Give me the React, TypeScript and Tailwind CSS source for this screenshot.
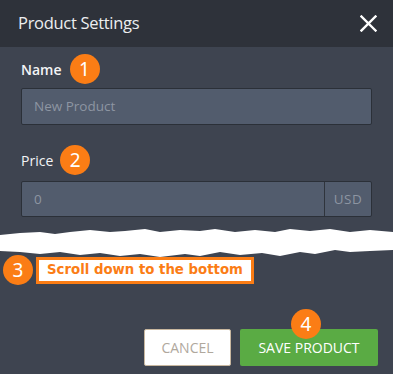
import React from "react";

function Badge({ n, className = "" }: { n: string; className?: string }) {
  return (
    <div
      className={
        "flex h-[30px] w-[30px] items-center justify-center rounded-full bg-[#fb7d15] text-[19px] leading-none text-white " +
        className
      }
      style={{ fontFamily: '"Noto Sans", sans-serif' }}
    >
      {n}
    </div>
  );
}

export default function App() {
  return (
    <div
      className="h-[374px] w-[393px] overflow-hidden bg-[#3e4450]"
      style={{ fontFamily: '"Open Sans", "Noto Sans", sans-serif' }}
    >
      {/* header */}
      <div className="flex h-[47px] items-center justify-between bg-[#2e323a] pl-[18px] pr-[16px]">
        <span className="text-[16.5px] font-normal tracking-[-0.3px] text-[#eceef0]">Product Settings</span>
        <svg width="17" height="17" viewBox="0 0 17 17" className="mt-[-1px]">
          <path d="M1.5 1.5 L15.5 15.5 M15.5 1.5 L1.5 15.5" stroke="#ffffff" strokeWidth="2.4" strokeLinecap="square" />
        </svg>
      </div>

      {/* name */}
      <div className="px-[21px] pt-[7px]">
        <div className="flex items-center gap-[8px]">
          <span className="text-[14px] font-semibold text-[#f3f4f6]">Name</span>
          <Badge n="1" />
        </div>
        <div className="mt-[4px] flex h-[37px] items-center rounded-[2px] border border-[#2b3038] bg-[#525c6d] px-[12px] text-[13.5px] text-[#8d95a2]">
          New Product
        </div>

        {/* price */}
        <div className="mt-[20px] flex items-center gap-[7px]">
          <span className="text-[14px] font-normal text-[#f3f4f6]">Price</span>
          <Badge n="2" />
        </div>
        <div className="mt-[6px] flex h-[36px] rounded-[2px] border border-[#2b3038] bg-[#525c6d] text-[13.5px] text-[#8d95a2]">
          <div className="flex flex-1 items-center px-[12px]">0</div>
          <div className="flex w-[47px] items-center justify-center border-l border-[#2f343c] tracking-[0.5px]">USD</div>
        </div>
      </div>

      {/* torn band */}
      <svg width="393" height="28" viewBox="0 0 393 28" className="mt-[12px] block">
        <polygon
          fill="#ffffff"
          points="0,6 20,4 40,3 55,5 70,3 90,1 110,3 125,2 145,0 160,3 180,1 200,2 215,0 235,3 255,1 275,3 290,0 310,2 330,0 350,3 370,1 393,3 393,21 370,22 350,23 335,21 315,25 300,23 280,27 262,24 240,26 220,23 200,27 185,25 160,28 140,25 120,27 100,24 80,26 60,23 40,25 20,23 0,22"
        />
      </svg>

      {/* scroll note */}
      <div className="mt-[-2px] flex items-center gap-[3px] pl-[3px]">
        <Badge n="3" />
        <div
          className="flex h-[27px] items-center border-[3px] border-[#fb7d15] bg-white px-[8px] text-[13.3px] font-bold text-[#fb7d15]"
          style={{ fontFamily: '"DejaVu Sans", sans-serif' }}
        >
          Scroll down to the bottom
        </div>
      </div>

      {/* buttons */}
      <div className="mt-[44px] flex justify-end gap-[9px] pr-[15px]">
        <button className="flex h-[37px] w-[87px] items-center justify-center rounded-[2px] border border-[#c8b79f] bg-white text-[14px] text-[#b0a89d]">
          CANCEL
        </button>
        <div className="relative">
          <button className="flex h-[37px] w-[138px] items-center justify-center rounded-[2px] bg-[#5aab44] text-[14px] text-white">
            SAVE PRODUCT
          </button>
          <Badge n="4" className="absolute left-[51px] top-[-20px]" />
        </div>
      </div>
    </div>
  );
}
